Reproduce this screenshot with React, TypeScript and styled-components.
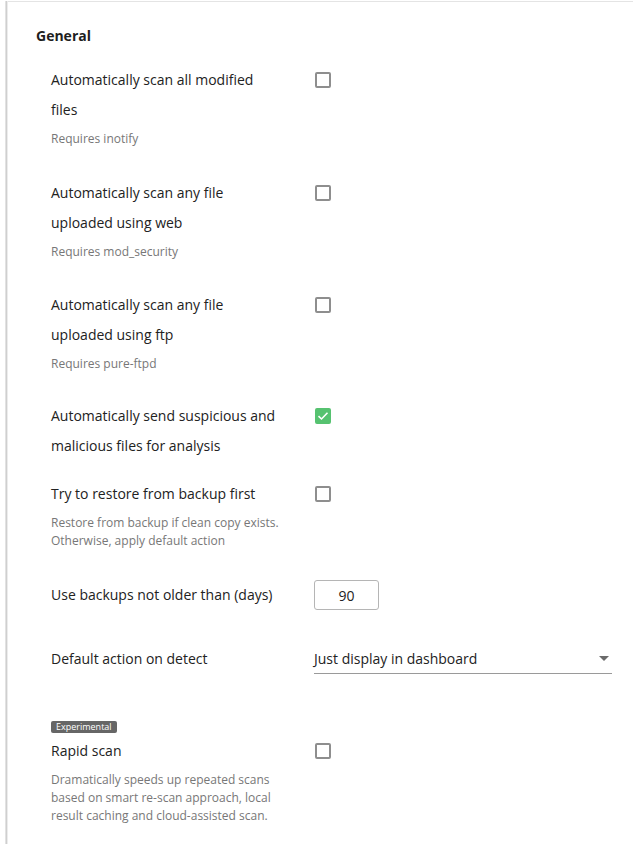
import React from "react";
import styled, { createGlobalStyle } from "styled-components";

const Global = createGlobalStyle`
  html, body { margin: 0; padding: 0; background: #fff; }
  body { font-family: "Open Sans", "Noto Sans", sans-serif; color: #222; }
  * { box-sizing: border-box; }
`;

const Frame = styled.div`
  margin-left: 5px;
  min-height: 844px;
  border-left: 1px solid #e2e2e2;
  box-shadow: inset 1px 0 0 #cfcfcf, inset 2px 0 0 #ececec;
  padding-left: 2px;
`;

const Panel = styled.div`
  border-top: 1px solid #e4e4e4;
  margin-top: 1px;
  padding: 24px 21px 0 28px;
`;

const Title = styled.h2`
  margin: 0 0 19px 0;
  font-size: 14px;
  font-weight: 700;
  line-height: 20px;
  color: #1e1e1e;
`;

const Row = styled.div<{ $mb: number }>`
  display: grid;
  grid-template-columns: 232px 1fr;
  column-gap: 31px;
  padding-left: 15px;
  margin-bottom: ${(p) => p.$mb}px;
  align-items: start;
`;

const LabelCol = styled.div`
  display: flex;
  flex-direction: column;
`;

const Label = styled.div<{ $pt?: number }>`
  font-size: 14px;
  line-height: 30px;
  color: #222;
  padding-top: ${(p) => p.$pt ?? 0}px;
`;

const Desc = styled.div`
  font-size: 12px;
  line-height: 18px;
  color: #777;
  margin-top: 5px;
`;

const Badge = styled.span`
  align-self: flex-start;
  background: #666;
  color: #fff;
  font-size: 9px;
  line-height: 12px;
  padding: 0 5px;
  border-radius: 2px;
  margin-bottom: 3px;
`;

const ControlCol = styled.div<{ $pt?: number }>`
  padding-top: ${(p) => p.$pt ?? 0}px;
  display: flex;
  align-items: center;
`;

const Box = styled.span<{ $checked?: boolean }>`
  width: 16px;
  height: 16px;
  margin-left: 1px;
  border-radius: 2px;
  border: 2px solid ${(p) => (p.$checked ? "#56c270" : "#8e8e8e")};
  background: ${(p) => (p.$checked ? "#56c270" : "#fff")};
  display: inline-flex;
  align-items: center;
  justify-content: center;
`;

const NumInput = styled.div`
  width: 65px;
  height: 30px;
  border: 1px solid #b5b5b5;
  border-radius: 3px;
  font-size: 14px;
  display: flex;
  align-items: center;
  justify-content: center;
  color: #222;
`;

const Select = styled.div`
  width: 298px;
  height: 34px;
  border-bottom: 1px solid #9a9a9a;
  display: flex;
  align-items: center;
  justify-content: space-between;
  padding: 4px 3px 0 0;
  font-size: 14px;
  color: #222;
`;

const Arrow = styled.span`
  width: 0;
  height: 0;
  border-left: 5px solid transparent;
  border-right: 5px solid transparent;
  border-top: 5px solid #6b6b6b;
`;

const Check = ({ checked }: { checked?: boolean }) => (
  <Box $checked={checked}>
    {checked && (
      <svg width="12" height="10" viewBox="0 0 12 10">
        <path d="M1.5 5.2 L4.5 8 L10.5 1.8" stroke="#fff" strokeWidth="1.6" fill="none" />
      </svg>
    )}
  </Box>
);

export default function App() {
  return (
    <>
      <Global />
      <Frame>
        <Panel>
          <Title>General</Title>
          <Row $mb={30}>
            <LabelCol>
              <Label>Automatically scan all modified files</Label>
              <Desc>Requires inotify</Desc>
            </LabelCol>
            <ControlCol $pt={7}>
              <Check />
            </ControlCol>
          </Row>
          <Row $mb={29}>
            <LabelCol>
              <Label>Automatically scan any file uploaded using web</Label>
              <Desc>Requires mod_security</Desc>
            </LabelCol>
            <ControlCol $pt={7}>
              <Check />
            </ControlCol>
          </Row>
          <Row $mb={28}>
            <LabelCol>
              <Label>Automatically scan any file uploaded using ftp</Label>
              <Desc>Requires pure-ftpd</Desc>
            </LabelCol>
            <ControlCol $pt={7}>
              <Check />
            </ControlCol>
          </Row>
          <Row $mb={18}>
            <LabelCol>
              <Label>Automatically send suspicious and malicious files for analysis</Label>
            </LabelCol>
            <ControlCol $pt={7}>
              <Check checked />
            </ControlCol>
          </Row>
          <Row $mb={30}>
            <LabelCol>
              <Label>Try to restore from backup first</Label>
              <Desc>Restore from backup if clean copy exists. Otherwise, apply default action</Desc>
            </LabelCol>
            <ControlCol $pt={7}>
              <Check />
            </ControlCol>
          </Row>
          <Row $mb={30}>
            <LabelCol>
              <Label>Use backups not older than (days)</Label>
            </LabelCol>
            <ControlCol>
              <NumInput>90</NumInput>
            </ControlCol>
          </Row>
          <Row $mb={47}>
            <LabelCol>
              <Label $pt={4}>Default action on detect</Label>
            </LabelCol>
            <ControlCol>
              <Select>
                <span>Just display in dashboard</span>
                <Arrow />
              </Select>
            </ControlCol>
          </Row>
          <Row $mb={20}>
            <LabelCol>
              <Badge>Experimental</Badge>
              <Label>Rapid scan</Label>
              <Desc>
                Dramatically speeds up repeated scans based on smart re-scan approach, local result
                caching and cloud-assisted scan.
              </Desc>
            </LabelCol>
            <ControlCol $pt={22}>
              <Check />
            </ControlCol>
          </Row>
        </Panel>
      </Frame>
    </>
  );
}
